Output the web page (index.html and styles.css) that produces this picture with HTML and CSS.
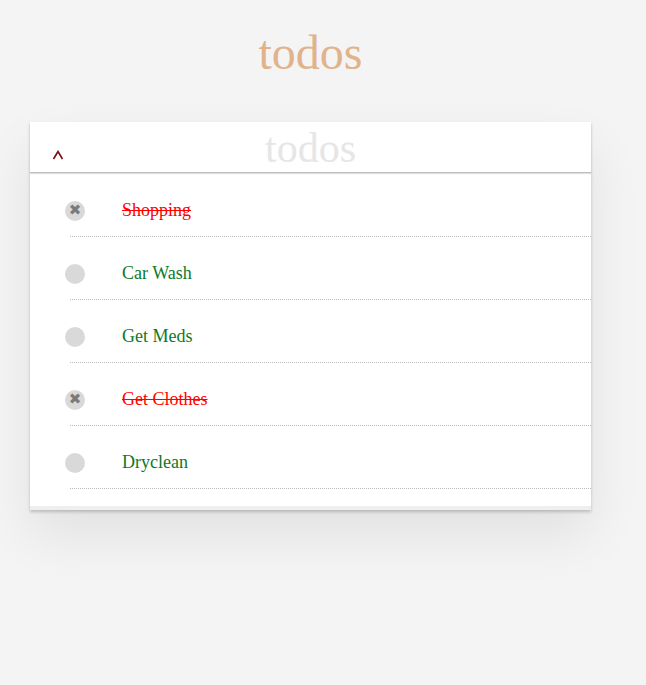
FILE: index.html
```html
<!DOCTYPE html>
<html>
<head>
<meta charset="utf-8">
<link rel="stylesheet" href="styles.css">
</head>
<body>
<div class="app">
  <h1 class="title">todos</h1>
  <section class="card">
    <header class="card-head">
      <svg class="toggle" width="12" height="10" viewBox="0 0 12 10"><polyline points="1.5,9 6,1.5 10.5,9" fill="none" stroke="#7a0a14" stroke-width="1.6"/></svg>
      <span class="placeholder">todos</span>
    </header>
    <ul class="list">
      <li class="item done"><span class="check">&#x2716;</span><span class="label">Shopping</span></li>
      <li class="item"><span class="check"></span><span class="label">Car Wash</span></li>
      <li class="item"><span class="check"></span><span class="label">Get Meds</span></li>
      <li class="item done"><span class="check">&#x2716;</span><span class="label">Get Clothes</span></li>
      <li class="item"><span class="check"></span><span class="label">Dryclean</span></li>
    </ul>
    <div class="card-foot"></div>
  </section>
</div>
</body>
</html>
```
FILE: styles.css
```css
html, body {
  margin: 0;
  padding: 0;
}
body {
  background: #f4f4f4;
  font-family: "Liberation Serif", "Times New Roman", serif;
  min-height: 685px;
}
.app {
  width: 561px;
  margin-left: 30px;
  padding-top: 25px;
}
.title {
  margin: 0 0 42px;
  font-size: 48px;
  font-weight: normal;
  line-height: 55px;
  text-align: center;
  color: #e1b38a;
}
.card {
  background: #fff;
  box-shadow: 0 2px 3px rgba(0,0,0,0.2), 0 25px 50px rgba(0,0,0,0.08);
}
.card-head {
  position: relative;
  height: 50px;
  border-bottom: 1px solid #bdbdbd;
  box-shadow: 0 1px 1px rgba(0,0,0,0.12);
  display: flex;
  justify-content: center;
  align-items: flex-end;
}
.toggle {
  position: absolute;
  left: 22px;
  top: 28px;
}
.placeholder {
  font-size: 42px;
  line-height: 48px;
  color: #e6e6e6;
}
.list {
  list-style: none;
  margin: 0;
  padding: 1px 0 0;
}
.item {
  box-sizing: border-box;
  height: 63px;
  padding-top: 11px;
  margin-left: 40px;
  border-bottom: 1px dotted #bbb;
  display: flex;
  align-items: center;
}
.check {
  width: 20px;
  height: 20px;
  border-radius: 50%;
  background: #d9d9d9;
  margin-left: -5px;
  display: flex;
  align-items: center;
  justify-content: center;
  color: #7a7a7a;
  font-family: "DejaVu Sans", sans-serif;
  font-size: 15px;
  line-height: 1;
}
.label {
  margin-left: 37px;
  font-size: 18px;
  color: #0a7a2a;
}
.done .label {
  color: #ff0000;
  text-decoration: line-through;
}
.card-foot {
  height: 17px;
  border-bottom: 4px solid #efefef;
}
```
